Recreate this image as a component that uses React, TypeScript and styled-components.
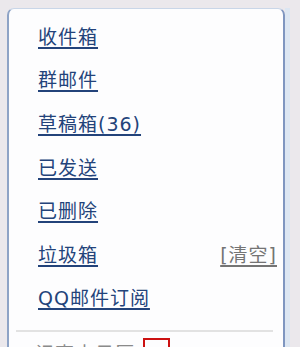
import React from "react";
import styled, { createGlobalStyle } from "styled-components";

const GlobalStyle = createGlobalStyle`
  html, body {
    margin: 0;
    padding: 0;
    background: #ebe8ec;
    overflow: hidden;
  }
  body {
    font-family: "DejaVu Sans", "Noto Sans CJK SC", sans-serif;
  }
`;

const Frame = styled.div`
  display: flex;
  width: 300px;
  height: 347px;
  padding-top: 8px;
  padding-left: 7px;
  box-sizing: border-box;
  overflow: hidden;
`;

const Panel = styled.div`
  width: 278px;
  height: 360px;
  flex-shrink: 0;
  background: #fdfdfe;
  border-left: 2px solid #8ea3c6;
  border-right: 2px solid #7f96c0;
  border-top: 1px solid #c9d6e8;
  border-radius: 7px 7px 0 0;
  box-sizing: border-box;
  padding: 6px 6px 0 29px;
`;

const Side = styled.div`
  width: 5px;
  height: 100%;
  background: #dce6f2;
`;

const List = styled.ul`
  list-style: none;
  margin: 0;
  padding: 0;
`;

const Row = styled.li`
  display: flex;
  align-items: center;
  justify-content: space-between;
  height: 43.6px;
`;

const Link = styled.a<{ $muted?: boolean }>`
  font-size: 19px;
  letter-spacing: 1px;
  line-height: 24px;
  color: ${(p) => (p.$muted ? "#747474" : "#23437a")};
  text-decoration: underline;
  text-underline-offset: 3px;
  text-decoration-thickness: 2px;
  cursor: pointer;
`;

const Divider = styled.div`
  height: 2px;
  background: #e2e2e2;
  margin: 10px 4px 0 -22px;
`;

const Footer = styled.div`
  display: flex;
  align-items: flex-start;
  gap: 8px;
  padding: 6px 0 0 0;
`;

const FooterText = styled.span`
  font-size: 19px;
  letter-spacing: 1px;
  color: #8a8a8a;
  line-height: 24px;
  margin: 4px 0 0 -3px;
`;

const RedBox = styled.span`
  width: 27px;
  height: 20px;
  border: 2px solid #cc1111;
  box-sizing: border-box;
`;

const folders = [
  { name: "收件箱" },
  { name: "群邮件" },
  { name: "草稿箱(36)" },
  { name: "已发送" },
  { name: "已删除" },
  { name: "垃圾箱", action: "[清空]" },
  { name: "QQ邮件订阅" },
];

export default function App() {
  return (
    <>
      <GlobalStyle />
      <Frame>
        <Panel>
          <List>
            {folders.map((f) => (
              <Row key={f.name}>
                <Link>{f.name}</Link>
                {f.action && <Link $muted>{f.action}</Link>}
              </Row>
            ))}
          </List>
          <Divider />
          <Footer>
            <FooterText>记事本日历</FooterText>
            <RedBox />
          </Footer>
        </Panel>
        <Side />
      </Frame>
    </>
  );
}
